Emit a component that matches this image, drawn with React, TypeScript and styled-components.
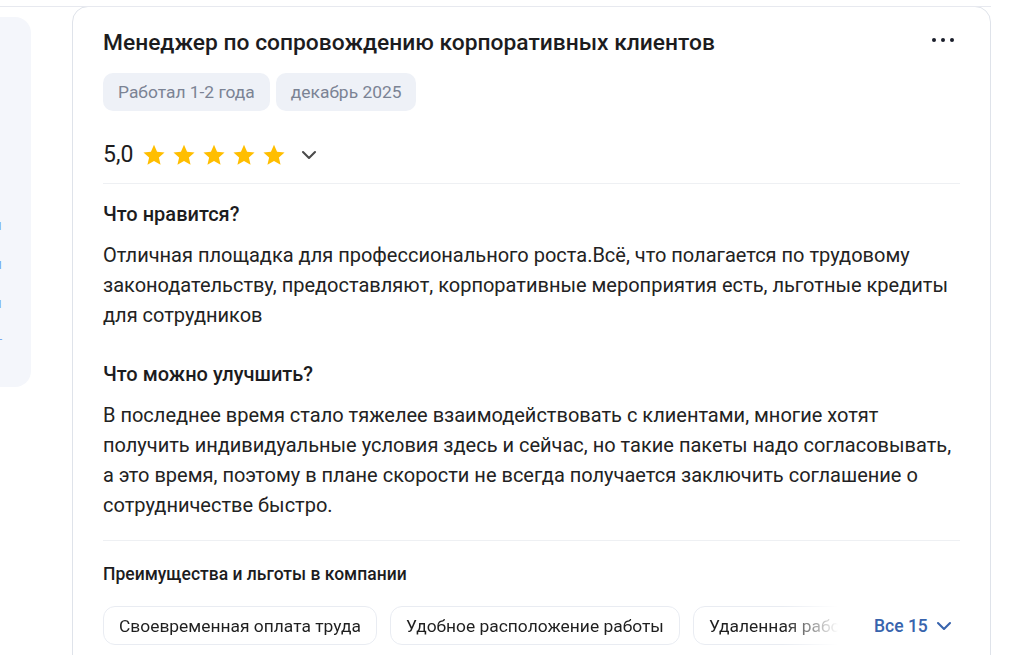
import React from "react";
import styled, { createGlobalStyle } from "styled-components";

const Global = createGlobalStyle`
  html, body { margin: 0; padding: 0; background: #ffffff; }
  body { font-family: Roboto, "Noto Sans", Arial, sans-serif; color: #1f1f1f; -webkit-font-smoothing: antialiased; }
  * { box-sizing: border-box; }
`;

const Page = styled.div`
  width: 991px;
  height: 655px;
  margin-top: 6px;
  border-top: 1px solid #e7e9ef;
  display: flex;
  align-items: flex-start;
  overflow: hidden;
`;

const SidePanel = styled.div`
  width: 31px;
  height: 370px;
  margin-top: 10px;
  background: #f4f6fb;
  border-radius: 0 16px 16px 0;
  overflow: hidden;
  display: flex;
  flex-direction: column;
  align-items: flex-end;
  padding-top: 201px;
  gap: 25px;
  flex-shrink: 0;
`;

const SideLink = styled.span`
  display: block;
  margin-right: 29px;
  font-size: 15px;
  line-height: 14px;
  color: #7aa9f0;
  white-space: nowrap;
`;

const Card = styled.article`
  flex: 1;
  margin-left: 41px;
  margin-top: -1px;
  border: 1px solid #dfe3ea;
  border-radius: 16px;
  padding: 22px 30px 0 30px;
  min-height: 700px;
`;

const Header = styled.div`
  display: flex;
  align-items: flex-start;
  justify-content: space-between;
`;

const Title = styled.h2`
  margin: 0;
  font-size: 22.8px;
  line-height: 28px;
  font-weight: 500;
  color: #1c1c1e;
`;

const MoreButton = styled.button`
  border: 0;
  background: none;
  padding: 0;
  margin-top: 9px;
  margin-right: 6px;
  display: flex;
  gap: 5px;
  cursor: pointer;
`;

const Dot = styled.span`
  width: 4px;
  height: 4px;
  border-radius: 50%;
  background: #1b1e2b;
`;

const Tags = styled.div`
  display: flex;
  gap: 6px;
  margin-top: 16px;
`;

const Tag = styled.span`
  height: 38px;
  padding: 0 15px;
  border-radius: 10px;
  background: #eef1f7;
  color: #7b8394;
  font-size: 17.4px;
  display: flex;
  align-items: center;
`;

const RatingRow = styled.div`
  display: flex;
  align-items: center;
  margin-top: 29px;
  padding-bottom: 13px;
  border-bottom: 1px solid #eef0f3;
`;

const Score = styled.span`
  font-size: 23px;
  line-height: 30px;
  color: #1c1c1e;
  margin-right: 9px;
`;

const Stars = styled.div`
  display: flex;
  gap: 6px;
`;

const Chevron = styled.svg<{ $color?: string; $gap: number }>`
  margin-left: ${(p) => p.$gap}px;
  flex-shrink: 0;
  color: ${(p) => p.$color || "#4a4a4a"};
`;

const Section = styled.section<{ $gap: number }>`
  margin-top: ${(p) => p.$gap}px;
`;

const SectionTitle = styled.h3`
  margin: 0;
  font-size: 20px;
  line-height: 24px;
  font-weight: 500;
  color: #1c1c1e;
`;

const Text = styled.p`
  margin: 14px 0 0 0;
  font-size: 20px;
  line-height: 30px;
  color: #222222;
`;

const Divider = styled.hr`
  border: 0;
  border-top: 1px solid #eef0f3;
  margin: 20px 0 0 0;
`;

const PerksTitle = styled.h4`
  margin: 22px 0 0 0;
  font-size: 17.5px;
  line-height: 22px;
  font-weight: 500;
  color: #1c1c1e;
`;

const PerksRow = styled.div`
  display: flex;
  align-items: center;
  margin-top: 21px;
`;

const PerksList = styled.div`
  display: flex;
  gap: 13px;
  width: 750px;
  overflow: hidden;
  flex-shrink: 0;
  -webkit-mask-image: linear-gradient(to right, #000 680px, transparent 735px);
  mask-image: linear-gradient(to right, #000 680px, transparent 735px);
`;

const Perk = styled.span`
  height: 39px;
  padding: 0 15px;
  border: 1px solid #e9ecf2;
  border-radius: 12px;
  font-size: 17.4px;
  display: flex;
  align-items: center;
  white-space: nowrap;
  color: #1f1f1f;
  flex-shrink: 0;
`;

const AllLink = styled.a`
  margin-left: 21px;
  display: flex;
  align-items: center;
  color: #3864ad;
  font-size: 17.5px;
  font-weight: 500;
  text-decoration: none;
  cursor: pointer;
`;

const Star = () => (
  <svg width="24" height="24" viewBox="0 0 24 24">
    <path
      d="M12 1.8l3.05 6.9 7.5.7-5.67 4.98 1.68 7.35L12 17.9l-6.56 3.83 1.68-7.35L1.45 9.4l7.5-.7z"
      fill="#ffbe00"
    />
  </svg>
);

const ChevronDown = ({ color, gap }: { color?: string; gap: number }) => (
  <Chevron $color={color} $gap={gap} width={16} height={16} viewBox="0 0 16 16" fill="none">
    <path d="M2 5l6 6 6-6" stroke="currentColor" strokeWidth="2.1" strokeLinecap="round" strokeLinejoin="round" />
  </Chevron>
);

export default function App() {
  return (
    <>
      <Global />
      <Page>
        <SidePanel>
          <SideLink>Отзывы</SideLink>
          <SideLink>Вакансии</SideLink>
          <SideLink>Зарплаты</SideLink>
          <SideLink>Рейтинг</SideLink>
        </SidePanel>
        <Card>
          <Header>
            <Title>Менеджер по сопровождению корпоративных клиентов</Title>
            <MoreButton aria-label="Ещё">
              <Dot />
              <Dot />
              <Dot />
            </MoreButton>
          </Header>
          <Tags>
            <Tag>Работал 1-2 года</Tag>
            <Tag>декабрь 2025</Tag>
          </Tags>
          <RatingRow>
            <Score>5,0</Score>
            <Stars>
              <Star />
              <Star />
              <Star />
              <Star />
              <Star />
            </Stars>
            <ChevronDown gap={15} />
          </RatingRow>
          <Section $gap={18}>
            <SectionTitle>Что нравится?</SectionTitle>
            <Text>
              Отличная площадка для профессионального роста.Всё, что полагается по трудовому
              законодательству, предоставляют, корпоративные мероприятия есть, льготные кредиты
              для сотрудников
            </Text>
          </Section>
          <Section $gap={32}>
            <SectionTitle>Что можно улучшить?</SectionTitle>
            <Text>
              В последнее время стало тяжелее взаимодействовать с клиентами, многие хотят
              получить индивидуальные условия здесь и сейчас, но такие пакеты надо согласовывать,
              а это время, поэтому в плане скорости не всегда получается заключить соглашение о
              сотрудничестве быстро.
            </Text>
          </Section>
          <Divider />
          <PerksTitle>Преимущества и льготы в компании</PerksTitle>
          <PerksRow>
            <PerksList>
              <Perk>Своевременная оплата труда</Perk>
              <Perk>Удобное расположение работы</Perk>
              <Perk>Удаленная работа</Perk>
            </PerksList>
            <AllLink>
              Все 15
              <ChevronDown color="#3864ad" gap={8} />
            </AllLink>
          </PerksRow>
        </Card>
      </Page>
    </>
  );
}
